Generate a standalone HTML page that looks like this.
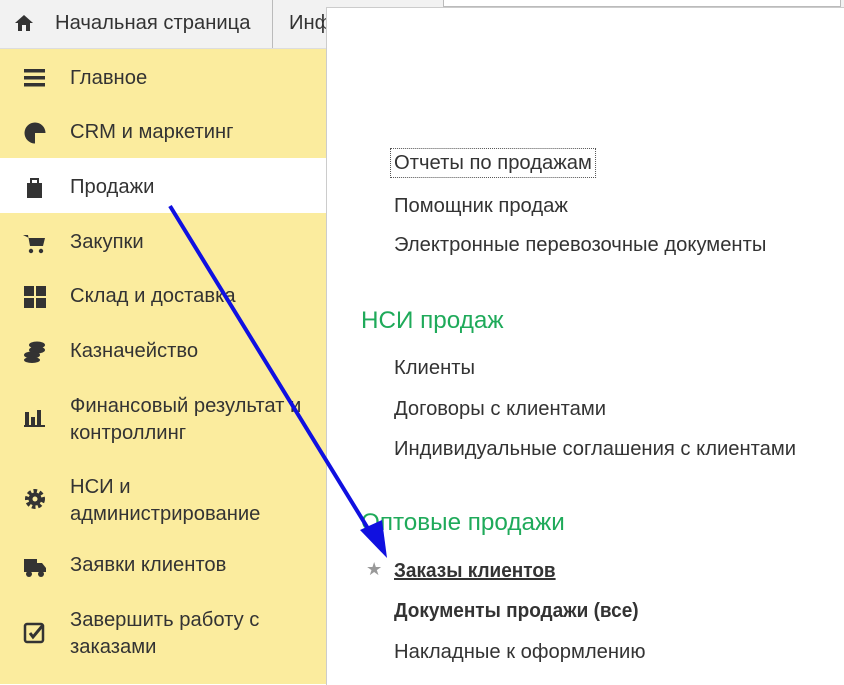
<!DOCTYPE html>
<html><head><meta charset="utf-8"><style>
body{margin:0;width:844px;height:684px;overflow:hidden;background:#fff;font-family:"Liberation Sans",sans-serif;color:#333;position:relative}
.top{position:absolute;left:0;top:0;width:844px;height:48px;background:#f2f2f2;border-bottom:1px solid #ddd}
.tab1{position:absolute;left:0;top:0;width:272px;height:48px;border-right:1px solid #bbb}
.t{position:absolute;white-space:nowrap;font-size:20px;transform:scaleX(1.01);transform-origin:0 0}
.side{position:absolute;left:0;top:49px;width:326px;height:635px;background:#fbec9e}
.sel{position:absolute;left:0;top:158px;width:326px;height:55px;background:#fff}
.panel{position:absolute;left:326px;top:7px;width:518px;height:677px;background:#fff;border-left:1px solid #ccc;border-top:1px solid #ccc}
.ic{position:absolute;left:23px;width:24px;height:24px}
.g{color:#1faa5a;font-size:24px}
</style></head><body>
<div class="top"><div class="tab1"></div></div>
<div style="position:absolute;left:443px;top:0;width:396px;height:6px;border:1px solid #bbb;border-top:none;background:#fff"></div>
<svg style="position:absolute;left:13px;top:12px" width="22" height="22"><path d="M2 11 L11 3 L20 11 H17 V19 H13 V13 H9 V19 H5 V11Z" fill="#333"/></svg>
<div class="t" style="left:55px;top:12px">Начальная страница</div>
<div class="t" style="left:289px;top:12px">Инф</div>
<div class="side"></div>
<div class="sel"></div>
<svg class="ic" style="top:67px"><rect x="1" y="2" width="21" height="3.5" fill="#333"/><rect x="1" y="9" width="21" height="3.5" fill="#333"/><rect x="1" y="16" width="21" height="3.5" fill="#333"/></svg>
<div class="t" style="left:70px;top:67px">Главное</div>
<svg class="ic" style="top:121px"><circle cx="12" cy="12" r="10.5" fill="#333"/><path d="M12 12 L23 12 A11 11 0 0 1 12 23Z" fill="#fbec9e"/></svg>
<div class="t" style="left:70px;top:121px">CRM и маркетинг</div>
<svg class="ic" style="top:176px"><rect x="4" y="7" width="15" height="15" fill="#333"/><path d="M8 9 V3 H15 V9" stroke="#333" stroke-width="2" fill="none"/></svg>
<div class="t" style="left:70px;top:176px">Продажи</div>
<svg class="ic" style="top:231px"><path d="M0 4 H5 L7 15 H20 L22 7 H6" fill="#333"/><circle cx="8" cy="20" r="2.2" fill="#333"/><circle cx="18" cy="20" r="2.2" fill="#333"/></svg>
<div class="t" style="left:70px;top:231px">Закупки</div>
<svg class="ic" style="top:285px"><rect x="1" y="1" width="10" height="10" fill="#333"/><rect x="13" y="1" width="10" height="10" fill="#333"/><rect x="1" y="13" width="10" height="10" fill="#333"/><rect x="13" y="13" width="10" height="10" fill="#333"/></svg>
<div class="t" style="left:70px;top:285px">Склад и доставка</div>
<svg class="ic" style="top:340px"><ellipse cx="14" cy="5" rx="8" ry="3.5" fill="#333"/><ellipse cx="14" cy="10" rx="8" ry="3.5" fill="#333"/><ellipse cx="9" cy="15" rx="8" ry="3.5" fill="#333"/><ellipse cx="9" cy="20" rx="8" ry="3" fill="#333"/></svg>
<div class="t" style="left:70px;top:340px">Казначейство</div>
<svg class="ic" style="top:406px"><rect x="2" y="6" width="4" height="14" fill="#333"/><rect x="8" y="11" width="4" height="9" fill="#333"/><rect x="14" y="4" width="4" height="16" fill="#333"/><rect x="1" y="19" width="21" height="2" fill="#333"/></svg>
<div class="t" style="left:70px;top:393px;line-height:27px">Финансовый результат и<br>контроллинг</div>
<svg class="ic" style="top:487px"><circle cx="12" cy="12" r="8" fill="none" stroke="#333" stroke-width="4" stroke-dasharray="3.5 2.5"/><circle cx="12" cy="12" r="6.5" fill="#333"/><circle cx="12" cy="12" r="2.5" fill="#fbec9e"/></svg>
<div class="t" style="left:70px;top:474px;line-height:27px">НСИ и<br>администрирование</div>
<svg class="ic" style="top:555px"><rect x="1" y="4" width="13" height="13" fill="#333"/><path d="M14 8 H19 L23 13 V17 H14Z" fill="#333"/><circle cx="6" cy="19" r="3" fill="#333"/><circle cx="18" cy="19" r="3" fill="#333"/></svg>
<div class="t" style="left:70px;top:554px">Заявки клиентов</div>
<svg class="ic" style="top:621px"><rect x="2" y="3" width="18" height="18" rx="2" fill="none" stroke="#333" stroke-width="2.5"/><path d="M7 12 L10 16 L20 4" stroke="#333" stroke-width="3" fill="none"/></svg>
<div class="t" style="left:70px;top:607px;line-height:27px">Завершить работу с<br>заказами</div>
<div class="panel"></div>
<div class="t" style="left:390px;top:148px;border:1px dotted #555;padding:2px 3px;height:24px;line-height:24px">Отчеты по продажам</div>
<div class="t" style="left:394px;top:195px">Помощник продаж</div>
<div class="t" style="left:394px;top:234px">Электронные перевозочные документы</div>
<div class="t g" style="left:361px;top:307px">НСИ продаж</div>
<div class="t" style="left:394px;top:357px">Клиенты</div>
<div class="t" style="left:394px;top:398px">Договоры с клиентами</div>
<div class="t" style="left:394px;top:438px">Индивидуальные соглашения с клиентами</div>
<div class="t g" style="left:361px;top:509px">Оптовые продажи</div>
<div class="t" style="left:366px;top:559px;color:#999;font-size:18px">★</div>
<div class="t" style="left:394px;top:560px;font-weight:bold;text-decoration:underline;transform:scaleX(0.95)">Заказы клиентов</div>
<div class="t" style="left:394px;top:600px;font-weight:bold;transform:scaleX(0.95)">Документы продажи (все)</div>
<div class="t" style="left:394px;top:641px">Накладные к оформлению</div>
<svg style="position:absolute;left:0;top:0" width="844" height="684"><line x1="170" y1="206" x2="372" y2="535" stroke="#1010e0" stroke-width="4"/><path d="M387 558 L360 530 L382 520Z" fill="#1010e0"/></svg>
</body></html>
